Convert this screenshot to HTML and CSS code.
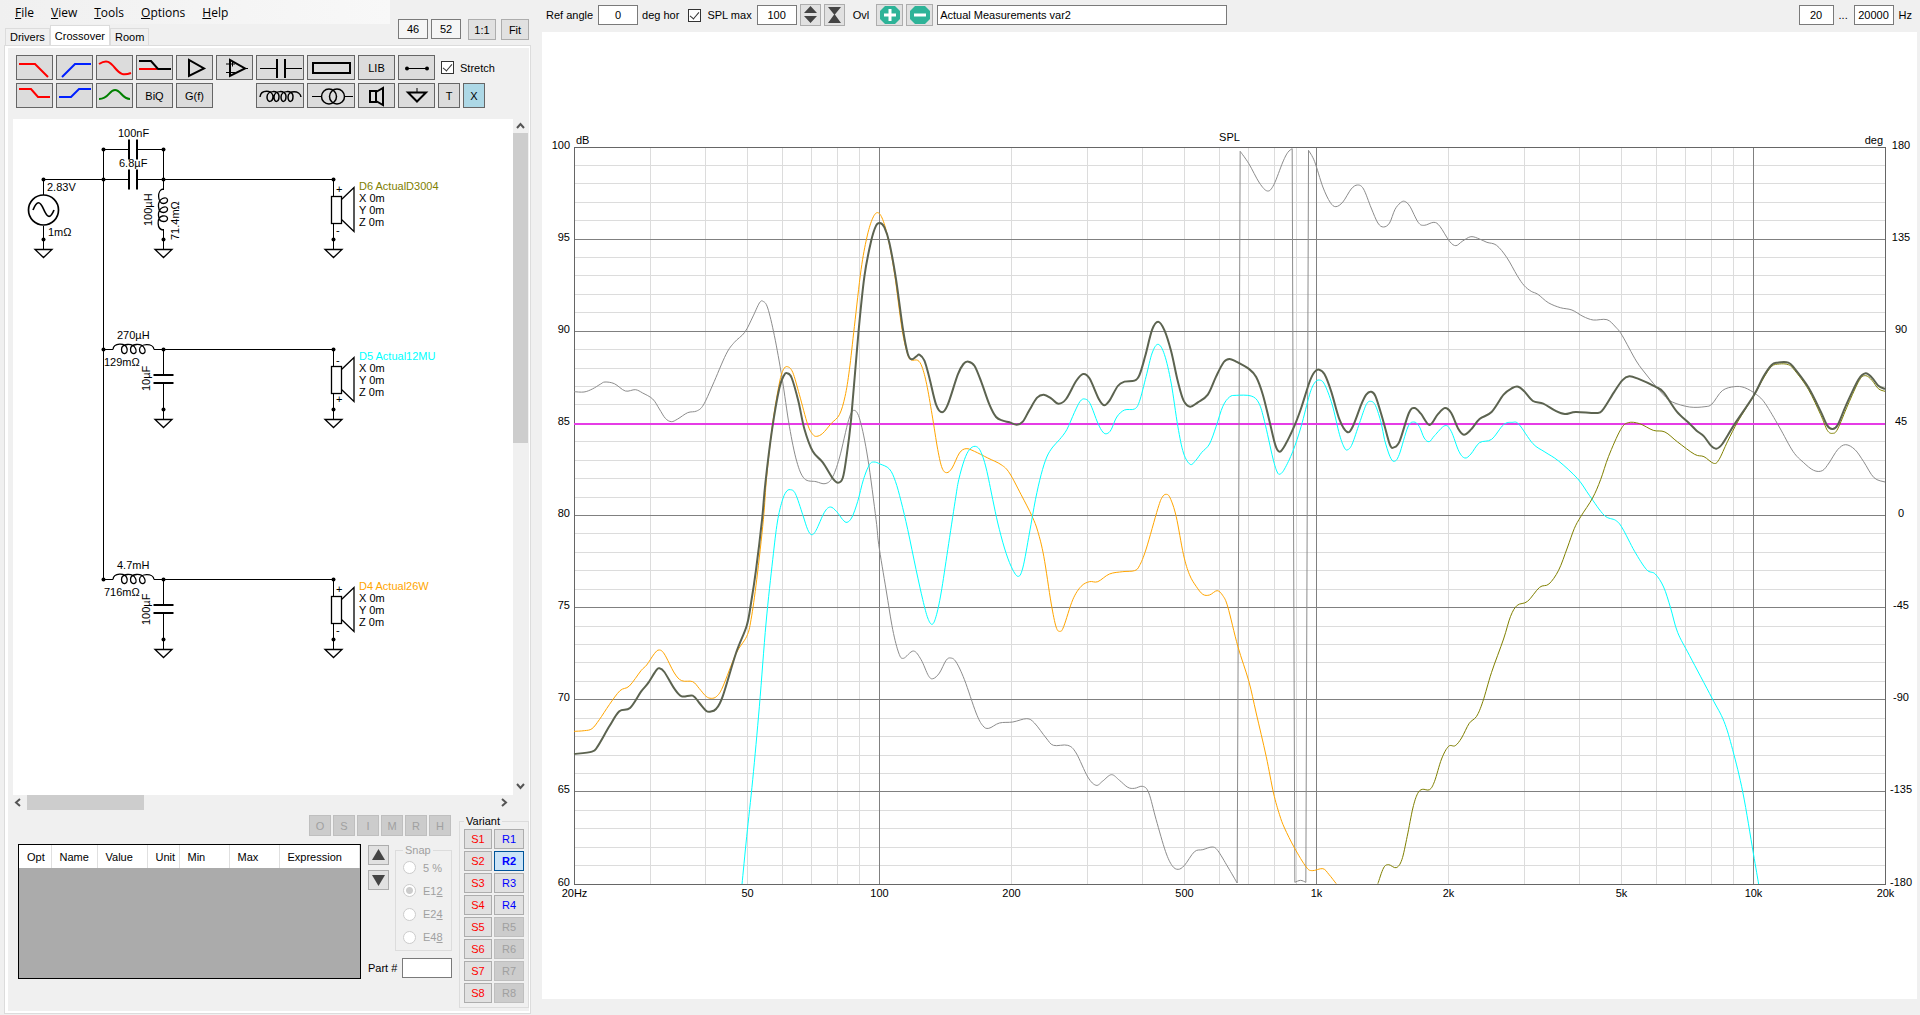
FILE: index.html
```html
<!DOCTYPE html>
<html lang="en">
<head>
    <meta charset="UTF-8">
    <meta name="viewport" content="width=device-width, initial-scale=1.0">
    <title>Crossover</title>
    <link rel="stylesheet" href="styles.css">
</head>
<body>
    <aside class="left">
        <header class="head">
            <div class="head-main">
                <nav class="menu">
                    <a href="#"><u>F</u>ile</a>
                    <a href="#"><u>V</u>iew</a>
                    <a href="#"><u>T</u>ools</a>
                    <a href="#"><u>O</u>ptions</a>
                    <a href="#"><u>H</u>elp</a>
                </nav>
                <div class="tabs">
                    <button class="tab">Drivers</button>
                    <button class="tab active">Crossover</button>
                    <button class="tab">Room</button>
                </div>
            </div>
            <div class="head-zoom">
                <input class="box" type="text" value="46" aria-label="Width">
                <input class="box" type="text" value="52" aria-label="Height">
                <button class="btn one">1:1</button>
                <button class="btn fit">Fit</button>
            </div>
        </header>

        <main class="frame">
            <div class="panel">
                <div class="toolbar">
                    <button class="tool" aria-label="Lowpass"><svg width="35" height="23"><path class="red" d="M2 8H18L31 21"/></svg></button>
                    <button class="tool" aria-label="Highpass"><svg width="35" height="23"><path class="blue" d="M5 21L18 8H34"/></svg></button>
                    <button class="tool" aria-label="Shelf"><svg width="35" height="23"><path class="red" d="M2 8C10 3 13 6 18 12S26 20 34 17"/></svg></button>
                    <button class="tool" aria-label="Shelf flat"><svg width="35" height="23"><path class="red" d="M2 13H20"/><path class="ink" d="M2 5H14L21 13H34"/></svg></button>
                    <button class="tool" aria-label="Buffer"><svg width="35" height="23"><path class="ink" d="M12 4V20L27 12.500Z"/></svg></button>
                    <button class="tool" aria-label="Opamp"><svg width="35" height="23"><path class="ink" d="M13 4V20L28 12.500Z"/><path class="fine" d="M9 8H18M15.500 5.500V10.500M9 16.500H18M28 12.500H31"/></svg></button>
                    <button class="tool" aria-label="Capacitor"><svg width="46" height="23"><path class="fine" d="M3 12.500H20M27 12.500H45"/><path class="ink" d="M20 3V22M28 3V22"/></svg></button>
                    <button class="tool" aria-label="Resistor"><svg width="46" height="23"><rect class="ink" x="5" y="7" width="37" height="10"/></svg></button>
                    <button class="tool">LIB</button>
                    <button class="tool" aria-label="Wire"><svg width="35" height="23"><path class="fine" d="M8 12.500H28"/><circle cx="8" cy="12.500" r="2"/><circle cx="28" cy="12.500" r="2"/></svg></button>
                    <label class="stretch"><input type="checkbox" class="check" checked> Stretch</label>
                    <button class="tool" aria-label="Low shelf"><svg width="35" height="23"><path class="red" d="M2 5H14L21 13H33"/></svg></button>
                    <button class="tool" aria-label="High shelf"><svg width="35" height="23"><path class="blue" d="M2 13H14L22 5H34"/></svg></button>
                    <button class="tool" aria-label="Peak"><svg width="35" height="23"><path class="green" d="M2 15C12 15 12 6 18 6S25 15 33 15"/></svg></button>
                    <button class="tool">BiQ</button>
                    <button class="tool">G(f)</button>
                    <button class="tool coil" aria-label="Inductor"><svg width="46" height="23"><path class="loops" d="M3 13C4 5 15 6 16 12C16 19 10 19 10 13C10 6 22 6 22 12C22 19 17 19 17 13C17 6 29 6 29 12C29 19 24 19 24 13C24 6 36 6 36 12C36 19 31 19 31 13C31 6 43 6 44 13"/></svg></button>
                    <button class="tool" aria-label="Transformer"><svg width="46" height="23"><path class="fine" d="M4 12.500H14M36 12.500H45"/><circle class="ring" cx="21" cy="12.500" r="7.500"/><circle class="ring" cx="29" cy="12.500" r="7.500"/></svg></button>
                    <button class="tool" aria-label="Speaker"><svg width="35" height="23"><path class="ink" d="M11 7H17V18H11ZM17 8L24 4V21L17 17"/></svg></button>
                    <button class="tool" aria-label="Ground"><svg width="35" height="23"><path class="fine" d="M18 4V9"/><path class="ink" d="M9 8.500H27L18 17.500Z"/></svg></button>
                    <button class="tool">T</button>
                    <button class="tool lit">X</button>
                </div>

                <div class="canvas">
                    <svg class="schematic" viewBox="13 119 500 676" preserveAspectRatio="xMinYMin meet">
                        <defs>
                            <g id="dot"><circle r="2" fill="#000"/></g>
                            <g id="ground"><circle r="2" fill="#000"/><path class="wire" d="M0 0V10"/><path class="part" d="M-8.500 10H8.500L0 18Z"/></g>
                            <g id="capacitor"><path class="plate" d="M-4 -10V10M4 -10V10"/></g>
                            <g id="inductor"><path class="part" d="M-20.500 0C-20 -7 -8 -7 -6.500 -1S-12 6 -12 0S-1 -7 2 -1S-3 6 -3 0S8 -7 11 -1S6 6 6 0S20 -7 20.500 0"/></g>
                            <g id="speaker"><path class="wire" d="M0 0V17M0 44V60"/><rect class="part" x="-2" y="17" width="10" height="27"/><path class="part" d="M8 20L20.500 8V52L8 40"/></g>
                        </defs>

                        <path class="wire" d="M43.500 195V179.500H128M138 179.500H333.500M103.500 579.500V149.500H128M138 149.500H163.500V190M163.500 229V240M43.500 226V240"/>
                        <path class="wire" d="M103.500 349.500H113M154 349.500H333.500M163.500 349.500V375M163.500 383V409"/>
                        <path class="wire" d="M103.500 579.500H113M154 579.500H333.500M163.500 579.500V605M163.500 613V639"/>
                        <use href="#dot" x="43.500" y="179.500"/><use href="#dot" x="103.500" y="149.500"/><use href="#dot" x="163.500" y="149.500"/>
                        <use href="#dot" x="103.500" y="179.500"/><use href="#dot" x="163.500" y="179.500"/><use href="#dot" x="333.500" y="179.500"/>
                        <use href="#dot" x="103.500" y="349.500"/><use href="#dot" x="163.500" y="349.500"/><use href="#dot" x="333.500" y="349.500"/>
                        <use href="#dot" x="103.500" y="579.500"/><use href="#dot" x="163.500" y="579.500"/><use href="#dot" x="333.500" y="579.500"/>
                        <use href="#ground" x="43.500" y="239.500"/><use href="#ground" x="163.500" y="239.500"/><use href="#ground" x="333.500" y="239.500"/>
                        <use href="#ground" x="163.500" y="409.500"/><use href="#ground" x="333.500" y="409.500"/>
                        <use href="#ground" x="163.500" y="639.500"/><use href="#ground" x="333.500" y="639.500"/>

                        <circle class="source" cx="43.500" cy="210" r="15"/>
                        <path class="source" d="M33 210C37 200 40 201 43.500 209S50 220 54 210"/>
                        <use href="#capacitor" x="133" y="149.500"/>
                        <use href="#capacitor" x="133" y="179.500"/>
                        <use href="#inductor" transform="translate(163.500 209.500) rotate(-90)"/>
                        <use href="#inductor" x="133.500" y="349.500"/>
                        <use href="#inductor" x="133.500" y="579.500"/>
                        <use href="#capacitor" transform="translate(163.500 379) rotate(90)"/>
                        <use href="#capacitor" transform="translate(163.500 609) rotate(90)"/>
                        <use href="#speaker" x="333.500" y="179.500"/>
                        <use href="#speaker" x="333.500" y="349.500"/>
                        <use href="#speaker" x="333.500" y="579.500"/>

                        <text x="118" y="137">100nF</text>
                        <text x="119" y="167">6.8µF</text>
                        <text x="47" y="191">2.83V</text>
                        <text x="48" y="236">1mΩ</text>
                        <text transform="translate(152 226) rotate(-90)">100µH</text>
                        <text transform="translate(179 240) rotate(-90)">71.4mΩ</text>
                        <text x="117" y="339">270µH</text>
                        <text x="104" y="366">129mΩ</text>
                        <text transform="translate(150 391) rotate(-90)">10µF</text>
                        <text x="117" y="569">4.7mH</text>
                        <text x="104" y="596">716mΩ</text>
                        <text transform="translate(150 625) rotate(-90)">100µF</text>

                        <text x="336" y="193">+</text><text x="336" y="234">-</text>
                        <text class="olive" x="359" y="190">D6 ActualD3004</text>
                        <text x="359" y="202">X 0m</text><text x="359" y="214">Y 0m</text><text x="359" y="226">Z 0m</text>
                        <text x="336" y="364">-</text><text x="336" y="403">+</text>
                        <text class="cyan" x="359" y="360">D5 Actual12MU</text>
                        <text x="359" y="372">X 0m</text><text x="359" y="384">Y 0m</text><text x="359" y="396">Z 0m</text>
                        <text x="336" y="593">+</text><text x="336" y="634">-</text>
                        <text class="orange" x="359" y="590">D4 Actual26W</text>
                        <text x="359" y="602">X 0m</text><text x="359" y="614">Y 0m</text><text x="359" y="626">Z 0m</text>
                    </svg>
                    <div class="vscroll">
                        <svg width="15" height="14"><path d="M4 9L7.500 5L11 9"/></svg>
                        <div class="vtrack"><div class="vthumb"></div></div>
                        <svg width="15" height="17"><path d="M4 6L7.500 10L11 6"/></svg>
                    </div>
                    <div class="hscroll">
                        <svg width="14" height="15"><path d="M7 4L3 7.500L7 11"/></svg>
                        <div class="htrack"><div class="hthumb"></div></div>
                        <svg width="17" height="15"><path d="M6 4L10 7.500L6 11"/></svg>
                    </div>
                </div>

                <div class="bottom">
                    <div class="parts">
                        <div class="modes">
                            <button class="btn" disabled>O</button>
                            <button class="btn" disabled>S</button>
                            <button class="btn" disabled>I</button>
                            <button class="btn" disabled>M</button>
                            <button class="btn" disabled>R</button>
                            <button class="btn" disabled>H</button>
                        </div>
                        <div class="parts-row">
                            <div class="table-box">
                                <table>
                                    <thead>
                                        <tr>
                                            <th class="c-opt">Opt</th>
                                            <th class="c-name">Name</th>
                                            <th class="c-value">Value</th>
                                            <th class="c-unit">Unit</th>
                                            <th class="c-min">Min</th>
                                            <th class="c-max">Max</th>
                                            <th>Expression</th>
                                        </tr>
                                    </thead>
                                </table>
                            </div>
                            <div class="side">
                                <div class="arrows">
                                    <button class="btn" aria-label="Move up"><svg width="19" height="18"><path d="M9.500 3L16 14H3Z"/></svg></button>
                                    <button class="btn" aria-label="Move down"><svg width="19" height="18"><path d="M9.500 15L16 4H3Z"/></svg></button>
                                </div>
                                <fieldset class="snap" disabled>
                                    <legend>Snap</legend>
                                    <label><input type="radio" name="snap"> 5 %</label>
                                    <label><input type="radio" name="snap" checked> <span>E1<u>2</u></span></label>
                                    <label><input type="radio" name="snap"> <span>E2<u>4</u></span></label>
                                    <label><input type="radio" name="snap"> <span>E4<u>8</u></span></label>
                                </fieldset>
                                <label class="partno" for="partno">Part #</label>
                                <input class="box" type="text" id="partno">
                            </div>
                        </div>
                    </div>
                    <fieldset class="variant">
                        <legend>Variant</legend>
                        <button class="btn s">S1</button><button class="btn r">R1</button>
                        <button class="btn s">S2</button><button class="btn r current">R2</button>
                        <button class="btn s">S3</button><button class="btn r">R3</button>
                        <button class="btn s">S4</button><button class="btn r">R4</button>
                        <button class="btn s">S5</button><button class="btn r" disabled>R5</button>
                        <button class="btn s">S6</button><button class="btn r" disabled>R6</button>
                        <button class="btn s">S7</button><button class="btn r" disabled>R7</button>
                        <button class="btn s">S8</button><button class="btn r" disabled>R8</button>
                    </fieldset>
                </div>
            </div>
        </main>
    </aside>

    <section class="right">
        <div class="chartbar">
            <label for="angle">Ref angle</label>
            <input class="box w40" type="text" id="angle" value="0">
            <span class="deg">deg hor</span>
            <label class="splmax"><input type="checkbox" class="check" checked> SPL max</label>
            <input class="box w40" type="text" value="100" aria-label="SPL max">
            <div class="pair">
                <button class="btn icon" aria-label="Scale step"><svg width="19" height="20"><path d="M9.500 1L16 8H3ZM9.500 18L16 11H3Z"/></svg></button>
                <button class="btn icon" aria-label="Scale fit"><svg width="19" height="20"><path d="M3 2H16L9.500 10ZM9.500 9L16 18H3Z"/></svg></button>
            </div>
            <span class="ovl">Ovl</span>
            <div class="pair">
                <button class="btn round" aria-label="Add overlay"><svg width="24" height="20"><path class="badge" d="M7 1H17L22 6V14L17 19H7L2 14V6Z"/><path class="sign" d="M6 10H18M12 4V16"/></svg></button>
                <button class="btn round" aria-label="Remove overlay"><svg width="24" height="20"><path class="badge" d="M7 1H17L22 6V14L17 19H7L2 14V6Z"/><path class="sign" d="M6 10H18"/></svg></button>
            </div>
            <input class="box overlay" type="text" value="Actual Measurements var2" aria-label="Overlay name">
            <div class="range">
                <input class="box from" type="text" value="20" aria-label="Lowest frequency">
                <span>...</span>
                <input class="box w40" type="text" value="20000" aria-label="Highest frequency">
                <span>Hz</span>
            </div>
        </div>
        <div class="chart"><svg id="spl"></svg></div>
    </section>

    <script src="chart.js"></script>
</body>
</html>
```
FILE: styles.css
```css
* {
    box-sizing: border-box;
}
body {
    display: flex;
    height: 100vh;
    margin: 0;
    background: #f0f0f0;
    color: #000;
    font-family: "Liberation Sans", Arial, sans-serif;
    font-size: 11px;
    overflow: hidden;
}
button, input {
    font: inherit;
    color: inherit;
}
.btn {
    display: flex;
    align-items: center;
    justify-content: center;
    padding: 0;
    background: #e1e1e1;
    border: 1px solid #adadad;
}
.btn:disabled {
    background: #ccc;
    border-color: #bfbfbf;
    color: #a0a0a0;
}
.btn path {
    fill: #444;
}
.box {
    height: 20px;
    padding: 0 2px;
    background: #fff;
    border: 1px solid #7a7a7a;
    text-align: center;
}
.check {
    appearance: none;
    flex: none;
    width: 13px;
    height: 13px;
    margin: 0;
    background: #fff;
    border: 1px solid #333;
    display: flex;
    justify-content: center;
}
.check:checked::after {
    content: "";
    width: 4px;
    height: 8px;
    border: solid #333;
    border-width: 0 1px 1px 0;
    transform: rotate(40deg);
}

/* left side */
.left {
    display: flex;
    flex-direction: column;
    flex: none;
    width: 542px;
    padding: 0 11px 1px 4px;
}
.head {
    display: flex;
    height: 45px;
}
.head-main {
    width: 386px;
    display: flex;
    flex-direction: column;
    justify-content: space-between;
}
.menu {
    display: flex;
    gap: 17px;
    height: 24px;
    margin-left: -4px;
    padding-left: 15px;
    align-items: center;
    background: linear-gradient(90deg, #f0f0f0, #f8f8f8);
    font-family: "Open Sans", "Noto Sans", sans-serif;
    font-size: 12px;
}
.menu a {
    color: #000;
    text-decoration: none;
}
.tabs {
    display: flex;
    align-items: flex-end;
    padding-left: 1px;
}
.tab {
    height: 17px;
    padding: 0 4px;
    background: #f0f0f0;
    border: 1px solid #dcdcdc;
    border-bottom: 0;
}
.tab.active {
    height: 21px;
    margin-bottom: -1px;
    background: #fff;
}
.head-zoom {
    display: flex;
    align-items: flex-start;
    gap: 3px;
    padding: 19px 0 0 8px;
}
.head-zoom .box {
    width: 30px;
    background: #f5f5f5;
}
.head-zoom .btn {
    width: 28px;
    height: 21px;
}
.head-zoom .one {
    margin-left: 4px;
}
.head-zoom .fit {
    margin-left: 2px;
}
.frame {
    flex: 1;
    min-height: 0;
    display: flex;
    padding: 2px 1px 2px 3px;
    background: #fff;
    border: 1px solid #dcdcdc;
}
.panel {
    flex: 1;
    min-width: 0;
    display: flex;
    flex-direction: column;
    background: #f0f0f0;
}

.toolbar {
    display: grid;
    grid-template-columns: repeat(6, 37px) 48px 48px 37px 37px 22px 22px;
    grid-auto-rows: 25px;
    gap: 3px;
    padding: 7px 0 11px 8px;
}
.tool {
    display: flex;
    align-items: center;
    justify-content: center;
    padding: 0;
    background: #dcdcdc;
    border: 1px solid #666;
}
.tool.lit {
    background: #add8e6;
}
.tool.coil {
    grid-column: 7;
}
.tool path, .tool rect, .ring {
    fill: none;
    stroke-width: 2;
}
.tool .red { stroke: #f00; }
.tool .blue { stroke: #0020ff; }
.tool .green { stroke: #008000; }
.tool .ink { stroke: #000; }
.tool .fine { stroke: #000; stroke-width: 1; }
.tool .loops, .tool .ring { stroke: #000; stroke-width: 1.5; }
.stretch {
    grid-column: 11 / span 2;
    display: flex;
    align-items: center;
    gap: 6px;
    padding-left: 3px;
    white-space: nowrap;
}

.canvas {
    flex: 1;
    min-height: 0;
    display: grid;
    grid-template-columns: 1fr 15px;
    grid-template-rows: 1fr 15px;
    margin: 0 1px 0 5px;
}
.schematic {
    width: 100%;
    height: 100%;
    min-height: 0;
    background: #fff;
}
.schematic text {
    font-size: 11px;
}
.wire, .part, .source, .plate {
    fill: none;
    stroke: #000;
    stroke-width: 1;
}
.part { stroke-width: 1.3; }
.source { stroke-width: 1.7; }
.plate { stroke-width: 2; }
.olive { fill: #808000; }
.cyan { fill: #0ff; }
.orange { fill: #ffa500; }
.vscroll, .hscroll {
    display: flex;
}
.vscroll {
    flex-direction: column;
}
.vscroll path, .hscroll path {
    fill: none;
    stroke: #555;
    stroke-width: 2;
}
.vtrack, .htrack {
    flex: 1;
}
.vthumb {
    height: 48%;
    background: #cdcdcd;
}
.hthumb {
    width: 25%;
    height: 15px;
    background: #cdcdcd;
}

.bottom {
    display: flex;
    gap: 7px;
    height: 201px;
    padding: 5px 0 3px 10px;
}
.parts {
    flex: 1;
}
.modes {
    display: flex;
    justify-content: flex-end;
    gap: 2px;
    margin-bottom: 8px;
    padding-right: 1px;
}
.modes .btn {
    width: 22px;
    height: 21px;
}
.parts-row {
    display: flex;
    gap: 7px;
}
.table-box {
    flex: 1;
    height: 135px;
    background: #ababab;
    border: 1px solid #000;
}
table {
    width: 100%;
    height: 23px;
    table-layout: fixed;
    border-collapse: collapse;
    background: #fff;
}
th {
    padding: 0 0 0 8px;
    font-weight: normal;
    text-align: left;
    border-right: 1px solid #e0e0e0;
}
.c-opt { width: 32px; }
.c-name { width: 46px; }
.c-value { width: 50px; }
.c-unit { width: 32px; }
.c-min, .c-max { width: 50px; }
.side {
    display: grid;
    grid-template-columns: 21px 1fr;
    grid-template-rows: 107px 20px;
    gap: 7px 6px;
    width: 84px;
}
.arrows {
    display: flex;
    flex-direction: column;
    gap: 5px;
    padding-top: 1px;
}
.arrows .btn {
    height: 20px;
}
.snap {
    min-width: 0;
    margin: 0;
    padding: 5px 0 6px 7px;
    border: 1px solid #dcdcdc;
    color: #a0a0a0;
    display: flex;
    flex-direction: column;
    justify-content: space-between;
}
legend {
    padding: 0 2px;
}
.snap label {
    display: flex;
    align-items: center;
    gap: 7px;
}
.snap input {
    appearance: none;
    width: 13px;
    height: 13px;
    margin: 0;
    background: #fff;
    border: 1px solid #ccc;
    border-radius: 50%;
}
.snap input:checked {
    background: radial-gradient(#ccc 3px, #fff 4px);
}
.side .partno {
    width: 34px;
    line-height: 20px;
    white-space: nowrap;
}
.side .box {
    width: 50px;
    justify-self: end;
}
.variant {
    display: grid;
    grid-template-columns: 28px 30px;
    grid-auto-rows: 20px;
    gap: 2px;
    width: 69px;
    height: 193px;
    margin: 0;
    padding: 2px 4px;
    border: 1px solid #dcdcdc;
}
.variant .s { color: #f00; }
.variant .r { color: #00f; }
.variant .r:disabled { color: #a0a0a0; }
.variant .current {
    background: #cce4f7;
    border-color: #005499;
    font-weight: bold;
}

/* right side */
.right {
    flex: 1;
    min-width: 0;
    display: flex;
    flex-direction: column;
    padding: 0 3px 16px 0;
}
.chartbar {
    display: flex;
    align-items: center;
    height: 32px;
    padding: 0 5px 2px 4px;
    white-space: nowrap;
}
.w40 {
    width: 40px;
}
.chartbar label + .box {
    margin-left: 5px;
}
.deg {
    margin: 0 9px 0 4px;
}
.splmax {
    display: flex;
    align-items: center;
    gap: 6px;
}
.pair {
    display: flex;
    gap: 3px;
    margin-left: 3px;
}
.icon {
    width: 21px;
    height: 22px;
}
.round {
    width: 27px;
    height: 22px;
}
.round .badge {
    fill: #2eb398;
}
.round .sign {
    stroke: #fff;
    stroke-width: 3;
}
.ovl {
    margin: 0 4px 0 8px;
}
.overlay {
    width: 290px;
    margin-left: 4px;
    text-align: left;
}
.range {
    display: flex;
    align-items: center;
    gap: 5px;
    margin-left: auto;
}
.range .from {
    width: 35px;
}
.range span:first-of-type {
    width: 10px;
}
.chart {
    flex: 1;
    min-height: 0;
    background: #fff;
}
.chart svg {
    display: block;
    width: 100%;
    height: 100%;
}
.chart text {
    font-size: 11px;
}
.minor { stroke: #dcdcdc; }
.major { stroke: #808080; }
.edge { fill: none; stroke: #666; }
.curve { fill: none; stroke-width: 1; }
.phase { stroke: #8c8c8c; }
.woofer { stroke: #ffa500; }
.mid { stroke: #0ff; }
.tweeter { stroke: #808000; }
.total { stroke: #5c6350; stroke-width: 2; }
.target { stroke: #e63ce6; stroke-width: 2; }
```
FILE: chart.js
```js
// curve points, x 0..3932 is 20 Hz..20 kHz (log), y 0..2211 is 100..60 dB
const W = 3932;
const H = 2211;

const phase = [
    '0,734 30,735 55,726 80,711 93,705 121,710 154,732 184,728 206,738 236,756 256,786 274,814 292,824 311,816 341,797 368,792 388,774 416,714 456,622 481,586 512,556 536,510 556,468 567,463 581,483 601,566 624,693 646,838 668,943 691,995 726,1004 753,1010 774,993 796,933 824,818 840,790 858,820 881,933 906,1118 914,1193 936,1328 956,1448 974,1518 988,1534 1018,1512 1041,1538 1063,1586 1077,1595 1096,1578 1116,1540 1130,1533 1146,1545 1171,1598 1206,1698 1226,1736 1244,1744 1276,1728 1316,1725 1358,1715 1381,1728 1416,1773 1438,1795 1481,1795 1506,1818 1541,1890 1566,1915 1586,1902 1612,1883 1636,1900 1661,1921 1681,1924 1706,1918 1724,1938 1746,2018 1774,2113 1794,2156 1812,2167 1831,2155 1861,2114 1886,2108 1914,2100 1931,2111 1961,2160 1989,2208',
    '1998,13 2024,50 2056,108 2080,132 2099,113 2126,45 2141,16 2154,5',
    '2162,2206 2179,2200 2195,2206',
    '2203,10 2221,43 2246,120 2268,166 2285,179 2306,165 2331,126 2350,114 2368,126 2391,183 2411,228 2428,240 2446,228 2462,188 2478,168 2491,163 2507,178 2532,226 2550,235 2579,226 2597,238 2626,283 2645,296 2664,283 2690,269 2716,276 2738,286 2767,295 2798,332 2829,386 2850,416 2871,433 2891,442 2922,467 2958,482 2993,489 3026,508 3057,519 3098,518 3124,540 3144,566 3186,642 3217,684 3243,716 3268,744 3294,765 3346,780 3392,779 3413,771 3444,731 3480,719 3511,722 3547,743 3573,770 3615,840 3656,913 3687,946 3718,970 3744,971 3764,948 3790,908 3814,893 3842,908 3868,944 3899,992 3932,1005'
];
const total = ['0,1821 54,1814 71,1798 106,1738 136,1693 168,1683 201,1634 221,1610 246,1571 256,1564 271,1575 301,1625 323,1648 356,1646 376,1668 396,1691 408,1694 426,1686 446,1648 486,1518 518,1436 531,1368 546,1268 564,1118 574,1008 594,848 616,723 631,683 640,679 653,693 673,763 691,846 716,913 746,946 776,994 792,1007 806,993 816,938 831,818 853,558 871,388 891,283 906,236 918,228 931,241 946,288 966,398 986,543 1001,620 1013,637 1028,627 1036,623 1051,641 1066,693 1086,773 1104,796 1121,773 1151,683 1168,651 1183,644 1201,656 1221,703 1246,773 1266,810 1286,821 1306,826 1328,833 1346,824 1366,789 1389,752 1409,743 1431,754 1453,770 1476,756 1506,702 1527,681 1546,694 1574,756 1590,775 1606,761 1631,717 1651,704 1681,701 1696,684 1713,628 1734,548 1752,524 1771,550 1791,613 1811,703 1828,760 1848,779 1871,766 1901,743 1926,688 1949,645 1966,636 1986,644 2026,667 2046,690 2066,743 2086,823 2104,896 2117,914 2134,892 2161,836 2181,783 2206,705 2221,675 2235,668 2251,682 2271,733 2296,818 2319,855 2336,838 2361,773 2376,743 2390,734 2404,748 2426,818 2447,893 2459,901 2476,883 2504,798 2521,783 2540,800 2566,834 2590,803 2612,783 2631,798 2652,845 2669,863 2690,848 2716,816 2752,795 2788,743 2814,723 2832,719 2850,733 2876,762 2907,770 2943,791 2972,801 3005,795 3067,798 3086,788 3119,736 3144,700 3165,688 3191,695 3243,719 3268,736 3307,793 3346,830 3367,851 3389,868 3410,896 3426,905 3444,891 3480,833 3537,748 3568,688 3592,654 3609,647 3642,647 3661,665 3702,721 3739,793 3759,836 3774,846 3790,834 3816,773 3852,698 3874,679 3893,692 3912,716 3932,726'];
const woofer = ['0,1753 31,1751 54,1745 76,1718 106,1673 138,1631 166,1617 201,1571 218,1554 241,1520 255,1509 271,1521 301,1578 323,1601 356,1604 376,1625 396,1648 412,1654 428,1648 446,1620 486,1520 518,1468 531,1418 548,1298 568,1118 578,988 596,828 616,708 628,668 640,659 656,676 676,743 701,833 716,862 728,868 746,859 771,830 796,803 813,748 826,668 841,538 861,368 878,273 894,218 909,197 924,213 941,270 961,378 984,548 1001,623 1012,639 1031,640 1044,660 1058,713 1074,803 1091,908 1104,963 1118,977 1134,963 1156,918 1176,905 1201,913 1241,933 1281,953 1306,978 1341,1043 1374,1108 1391,1153 1409,1228 1431,1368 1446,1440 1458,1453 1469,1438 1496,1358 1521,1318 1546,1304 1571,1304 1606,1281 1646,1274 1681,1271 1696,1256 1716,1206 1751,1085 1764,1051 1776,1042 1788,1053 1806,1108 1828,1223 1846,1283 1866,1318 1886,1342 1906,1344 1929,1331 1946,1346 1961,1380 1991,1498 2024,1603 2046,1698 2076,1828 2098,1938 2116,2003 2131,2043 2161,2103 2196,2160 2214,2171 2246,2165 2264,2182 2286,2210'];
const mid = ['504,2211 518,2068 536,1898 556,1678 576,1428 596,1238 610,1125 624,1063 636,1035 648,1028 664,1040 686,1103 701,1148 713,1163 726,1150 751,1096 769,1080 788,1094 806,1118 819,1126 834,1110 851,1063 868,998 886,953 900,945 918,951 946,966 964,1003 981,1063 1001,1148 1026,1268 1046,1358 1061,1413 1074,1432 1086,1408 1101,1338 1121,1208 1143,1063 1154,998 1171,938 1186,908 1203,898 1219,912 1236,963 1256,1058 1271,1128 1291,1203 1311,1258 1331,1288 1346,1263 1366,1158 1384,1058 1401,983 1418,930 1436,900 1456,878 1478,848 1501,796 1518,763 1532,756 1548,770 1571,828 1586,855 1598,860 1611,848 1628,810 1651,789 1681,786 1696,763 1716,688 1734,618 1752,592 1771,623 1791,708 1811,838 1828,918 1848,952 1864,941 1883,916 1906,891 1926,838 1946,778 1966,750 1986,745 2031,747 2054,768 2071,823 2096,933 2109,975 2118,981 2131,966 2156,913 2181,838 2206,743 2221,708 2235,699 2251,712 2274,773 2296,863 2311,903 2321,908 2334,891 2356,828 2376,773 2390,763 2404,776 2421,828 2431,878 2447,928 2460,943 2475,923 2501,840 2519,825 2535,838 2550,873 2565,884 2581,866 2612,836 2631,853 2654,913 2672,933 2690,921 2716,887 2752,877 2788,833 2814,826 2834,832 2876,890 2912,915 2953,942 3010,995 3046,1046 3090,1105 3124,1120 3144,1143 3181,1213 3217,1268 3243,1281 3268,1320 3289,1383 3310,1456 3346,1526 3413,1653 3449,1723 3475,1808 3506,1938 3537,2118 3553,2211'];
const tweeter = ['2411,2210 2428,2163 2443,2153 2466,2162 2483,2138 2499,2068 2516,1983 2530,1940 2544,1927 2566,1928 2581,1903 2602,1836 2623,1798 2643,1796 2662,1773 2685,1729 2707,1708 2726,1663 2752,1576 2788,1476 2809,1408 2829,1375 2860,1363 2896,1321 2924,1311 2953,1270 2979,1203 3000,1145 3020,1108 3055,1053 3079,998 3103,928 3139,848 3162,827 3196,830 3237,850 3272,855 3310,885 3361,922 3389,929 3418,949 3434,938 3460,883 3491,823 3537,749 3568,693 3592,658 3615,651 3642,653 3661,670 3702,727 3739,803 3759,850 3775,859 3790,846 3821,773 3855,700 3874,686 3893,700 3912,725 3932,733'];

const svg = document.getElementById('spl');

function add(name, attrs, text) {
    const el = document.createElementNS('http://www.w3.org/2000/svg', name);
    for (const key in attrs) el.setAttribute(key, attrs[key]);
    if (text !== undefined) el.textContent = text;
    svg.appendChild(el);
}

// smooth line through the points of each segment, segments joined by straight lines
function smooth(segments, px, py) {
    return segments.map((segment, n) => {
        const p = segment.split(' ').map(s => {
            const [x, y] = s.split(',');
            return [px(x / W), py(y / H)];
        });
        let d = (n ? 'L' : 'M') + p[0];
        for (let i = 0; i < p.length - 1; i++) {
            const a = p[i - 1] || p[i], b = p[i], c = p[i + 1], e = p[i + 2] || c;
            d += `C${b[0] + (c[0] - a[0]) / 6},${b[1] + (c[1] - a[1]) / 6} ${c[0] - (e[0] - b[0]) / 6},${c[1] - (e[1] - b[1]) / 6} ${c}`;
        }
        return d;
    }).join('');
}

function draw() {
    const width = svg.clientWidth, height = svg.clientHeight;
    const left = 32, right = width - 32, top = 115, bottom = height - 115;
    const px = t => left + t * (right - left);
    const py = t => top + t * (bottom - top);
    const fx = f => Math.floor(px(Math.log10(f / 20) / 3)) + 0.5;
    const dy = db => Math.floor(py((100 - db) / 40)) + 0.5;
    svg.replaceChildren();

    const vline = (f, cls) => add('line', { class: cls, x1: fx(f), x2: fx(f), y1: top, y2: bottom });
    const hline = (db, cls) => add('line', { class: cls, x1: left, x2: right, y1: dy(db), y2: dy(db) });
    for (const decade of [10, 100, 1000, 10000]) {
        for (let n = 2; n < 10; n++) {
            const f = n * decade;
            if (f > 20 && f < 20000) vline(f, 'minor');
        }
    }
    for (let db = 61; db < 100; db++) {
        if (db % 5) hline(db, 'minor');
    }
    for (let db = 65; db < 100; db += 5) hline(db, 'major');
    [100, 1000, 10000].forEach(f => vline(f, 'major'));
    add('rect', { class: 'edge', x: left + 0.5, y: top + 0.5, width: right - left, height: bottom - top });

    const target = dy(85) + 0.5;
    add('line', { class: 'target', x1: left, x2: right, y1: target, y2: target });
    const curves = { phase, woofer, mid, tweeter, total };
    for (const name in curves) {
        add('path', { class: 'curve ' + name, d: smooth(curves[name], px, py) });
    }

    const label = (x, y, anchor, text) => add('text', { x, y, 'text-anchor': anchor }, text);
    for (let i = 0; i <= 8; i++) {
        const y = Math.floor(py(i / 8)) + 2;
        label(left - 4, y, 'end', 100 - i * 5);
        label(right + 16, y, 'middle', 180 - i * 45);
    }
    const ticks = { 20: '20Hz', 50: '50', 100: '100', 200: '200', 500: '500', 1000: '1k', 2000: '2k', 5000: '5k', 10000: '10k', 20000: '20k' };
    for (const f in ticks) label(fx(f), bottom + 13, 'middle', ticks[f]);
    label(left + 2, top - 3, 'start', 'dB');
    label(right - 2, top - 3, 'end', 'deg');
    label(px(0.5), top - 6, 'middle', 'SPL');
}

draw();
window.addEventListener('resize', draw);
```
